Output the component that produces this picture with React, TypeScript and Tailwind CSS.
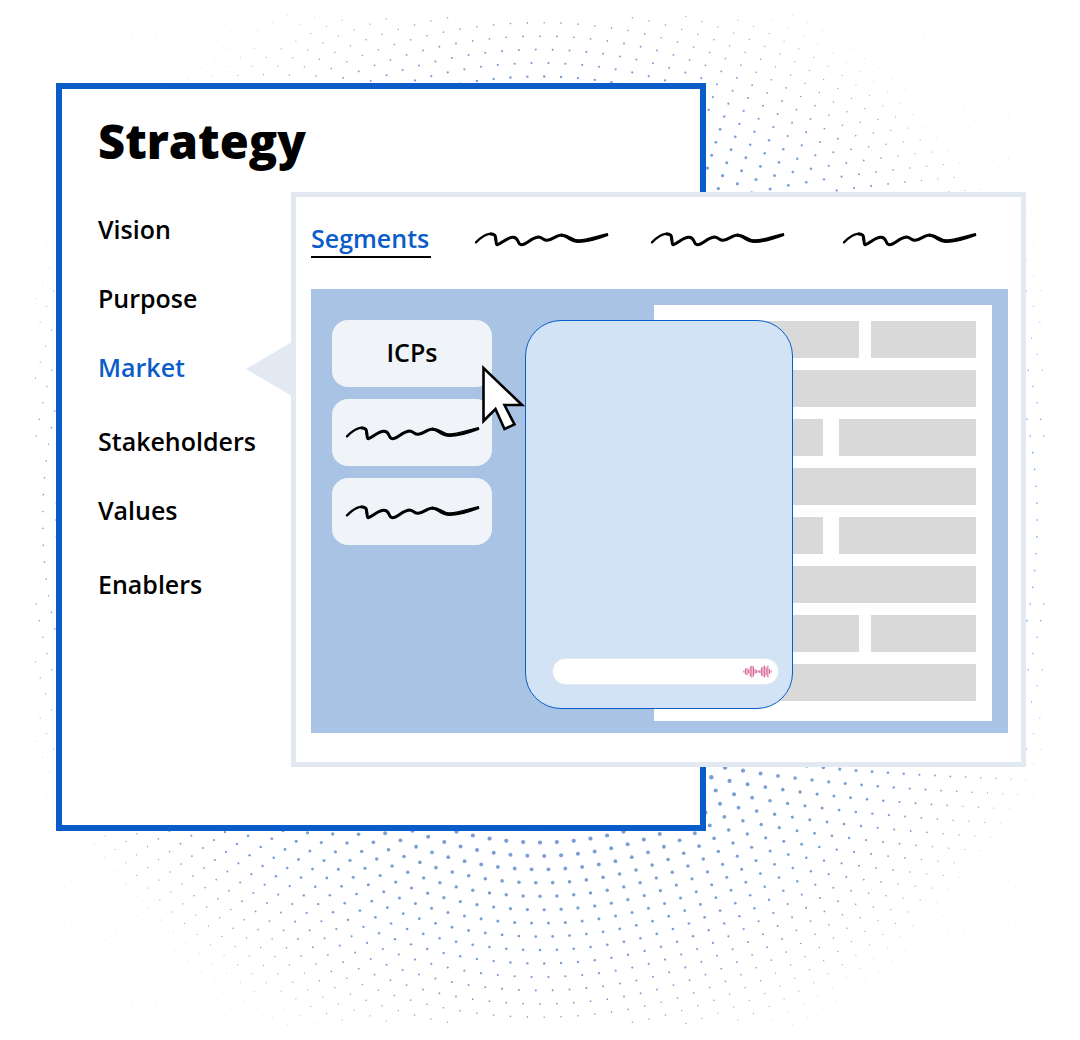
import React from "react";

interface LinkItem {
  label: string;
  active?: boolean;
}

const menuGroups: LinkItem[][] = [
  [{ label: "Vision" }, { label: "Purpose" }, { label: "Market", active: true }],
  [{ label: "Stakeholders" }, { label: "Values" }],
  [{ label: "Enablers" }],
];

const CENTER_X = 540;
const CENTER_Y = 520;
const REACH = 505;
const RING_STEP = 13.44;

// Each ring holds five more dots than the one inside it.
const dots: { x: number; y: number; r: number }[] = [];
for (let ring = 20; ring <= 48; ring++) {
  const radius = ring * RING_STEP;
  for (let i = 0; i < ring * 5; i++) {
    const angle = (i * 2 * Math.PI) / (ring * 5);
    const dx = radius * Math.cos(angle);
    const dy = radius * Math.sin(angle);
    if (Math.abs(dx) > REACH || Math.abs(dy) > REACH) continue;
    dots.push({
      x: CENTER_X + dx,
      y: CENTER_Y + dy,
      r: Math.max(0.28, 2.1 - (radius - 322) * 0.0073),
    });
  }
}

const DotField: React.FC = () => (
  <svg
    viewBox="0 0 1080 1040"
    className="absolute inset-x-0 top-0 w-full"
    fill="#7a9fd4"
    aria-hidden="true"
  >
    {dots.map((dot, i) => (
      <circle key={i} cx={dot.x} cy={dot.y} r={dot.r} />
    ))}
  </svg>
);

const Scribble: React.FC = () => (
  <svg
    viewBox="0 0 405 48"
    className="w-[135px] h-4"
    fill="none"
    stroke="black"
    strokeLinecap="round"
    strokeLinejoin="round"
    aria-hidden="true"
  >
    <path strokeWidth="7" d="M6 34C18 22 34 9 50 8C63 8 64 15 65 28" />
    <path
      strokeWidth="9"
      d="M50 9C66 9 64 17 66 28C67 36 66 41 70 41C82 39 94 22 115 19C136 17 128 40 142 41C158 41 170 21 193 18C205 18 208 29 220 28C236 26 248 12 264 12"
    />
    <path
      fill="black"
      strokeWidth="4"
      d="M262 10C286 9 290 27 314 27C344 26 372 14 400 8L401 13C372 24 345 34 314 34C284 34 280 15 262 15Z"
    />
  </svg>
);

const Cursor: React.FC = () => (
  <svg
    viewBox="0 0 44 68"
    className="absolute left-[149px] top-[43px] z-10 w-11 h-[68px]"
    fill="white"
    stroke="black"
    strokeWidth="2.6"
    aria-hidden="true"
  >
    <path d="M2.5 5L2.5 58L14.5 46L23.5 66L33.5 61.5L23.5 42L41 42Z" />
  </svg>
);

const waveBars = [2, 6, 7, 4, 10, 12, 10, 5, 3, 2, 3, 8, 10, 12, 8, 12, 5, 2];

const VoiceWave: React.FC = () => (
  <svg viewBox="0 0 29 13" className="w-[29px] h-[13px]" fill="#d96a9b" aria-hidden="true">
    {waveBars.map((h, i) => (
      <rect key={i} x={i * 1.6 + 0.3} y={6.5 - h / 2} width="1.1" height={h} />
    ))}
  </svg>
);

const Sidebar: React.FC = () => (
  <section className="col-start-1 col-end-3 row-start-1 row-end-4 border-6 border-[#0a5dc8] bg-white pl-9 pt-[22px]">
    <h1 className="text-[47px] leading-[60px] font-extrabold">Strategy</h1>
    <nav className="mt-10 flex flex-col items-start gap-[38px]">
      {menuGroups.map((group, i) => (
        <div key={i} className="flex flex-col items-start gap-[33px]">
          {group.map((item) => (
            <a
              key={item.label}
              href="#"
              className={`text-[25px] leading-9 font-semibold ${item.active ? "text-[#0a5dc8]" : "text-black"}`}
            >
              {item.label}
            </a>
          ))}
        </div>
      ))}
    </nav>
  </section>
);

const Tabs: React.FC = () => (
  <nav className="flex h-[92px] items-center gap-[41px] pb-2">
    <a
      href="#"
      className="min-w-[122px] text-[25px] leading-9 font-semibold text-[#0a5dc8]"
    >
      <span className="block w-[120px] border-b-2 border-black">Segments</span>
    </a>
    <a href="#" aria-label="Second tab">
      <Scribble />
    </a>
    <a href="#" aria-label="Third tab">
      <Scribble />
    </a>
    <a href="#" aria-label="Fourth tab" className="ml-4">
      <Scribble />
    </a>
  </nav>
);

const SegmentButtons: React.FC = () => (
  <div className="relative col-start-1 row-start-1 mt-[15px] flex flex-col gap-3">
    <button className="h-[67px] rounded-2xl bg-[#f0f4f9] pb-1 text-[25px] leading-9 font-semibold">
      ICPs
    </button>
    <button
      className="flex h-[67px] items-center justify-center rounded-2xl bg-[#f0f4f9]"
      aria-label="Second segment"
    >
      <Scribble />
    </button>
    <button
      className="flex h-[67px] items-center justify-center rounded-2xl bg-[#f0f4f9]"
      aria-label="Third segment"
    >
      <Scribble />
    </button>
    <Cursor />
  </div>
);

const rows = ["narrow", "full", "wide", "full", "wide", "full", "narrow", "full"];

const Report: React.FC = () => (
  <div className="col-start-4 col-end-6 row-start-1 flex flex-col gap-3 bg-white px-4 pt-4 pb-5">
    {rows.map((kind, i) => (
      <div key={i} className={`flex h-[37px] ${kind === "wide" ? "gap-4" : "gap-3"}`}>
        <div className="flex-1 bg-[#d9d9d9]" />
        {kind === "narrow" && <div className="w-[105px] bg-[#d9d9d9]" />}
        {kind === "wide" && <div className="w-[137px] bg-[#d9d9d9]" />}
      </div>
    ))}
  </div>
);

const ChatPanel: React.FC = () => (
  <div className="z-10 col-start-3 col-end-5 row-start-1 mt-[15px] mb-3 flex flex-col justify-end rounded-[36px] border border-[#0a5dc8] bg-[#d2e3f6] pr-[13px] pb-[23px] pl-[26px]">
    <form className="flex h-[27px] items-center rounded-full border border-[#e2e9f2] bg-white pr-1.5 pl-3">
      <input type="text" aria-label="Message" className="min-w-0 flex-1 text-sm outline-none" />
      <button type="button" aria-label="Speak">
        <VoiceWave />
      </button>
    </form>
  </div>
);

const MarketWindow: React.FC = () => (
  <section className="relative col-start-2 col-end-4 row-start-2 border-5 border-[#e2e9f2] bg-white pr-[13px] pb-[29px] pl-[15px]">
    <svg
      viewBox="0 0 46 54"
      className="absolute top-[145px] -left-[50px] h-[54px] w-[46px]"
      fill="#e2e9f2"
      aria-hidden="true"
    >
      <path d="M0 27L46 0V54Z" />
    </svg>
    <Tabs />
    <div className="grid grid-cols-[160px_33px_minmax(0,129fr)_minmax(0,139fr)_minmax(0,199fr)] bg-[#a9c3e5] pt-4 pr-4 pb-3 pl-[21px]">
      <SegmentButtons />
      <Report />
      <ChatPanel />
    </div>
  </section>
);

const App: React.FC = () => {
  return (
    <main className="relative min-h-screen bg-white font-['Open_Sans',sans-serif] text-black">
      <DotField />
      <div className="relative grid grid-cols-[235px_minmax(0,415fr)_minmax(0,320fr)] grid-rows-[109px_auto_64px] pt-[83px] pr-[54px] pl-14">
        <Sidebar />
        <MarketWindow />
      </div>
    </main>
  );
};

export default App;
